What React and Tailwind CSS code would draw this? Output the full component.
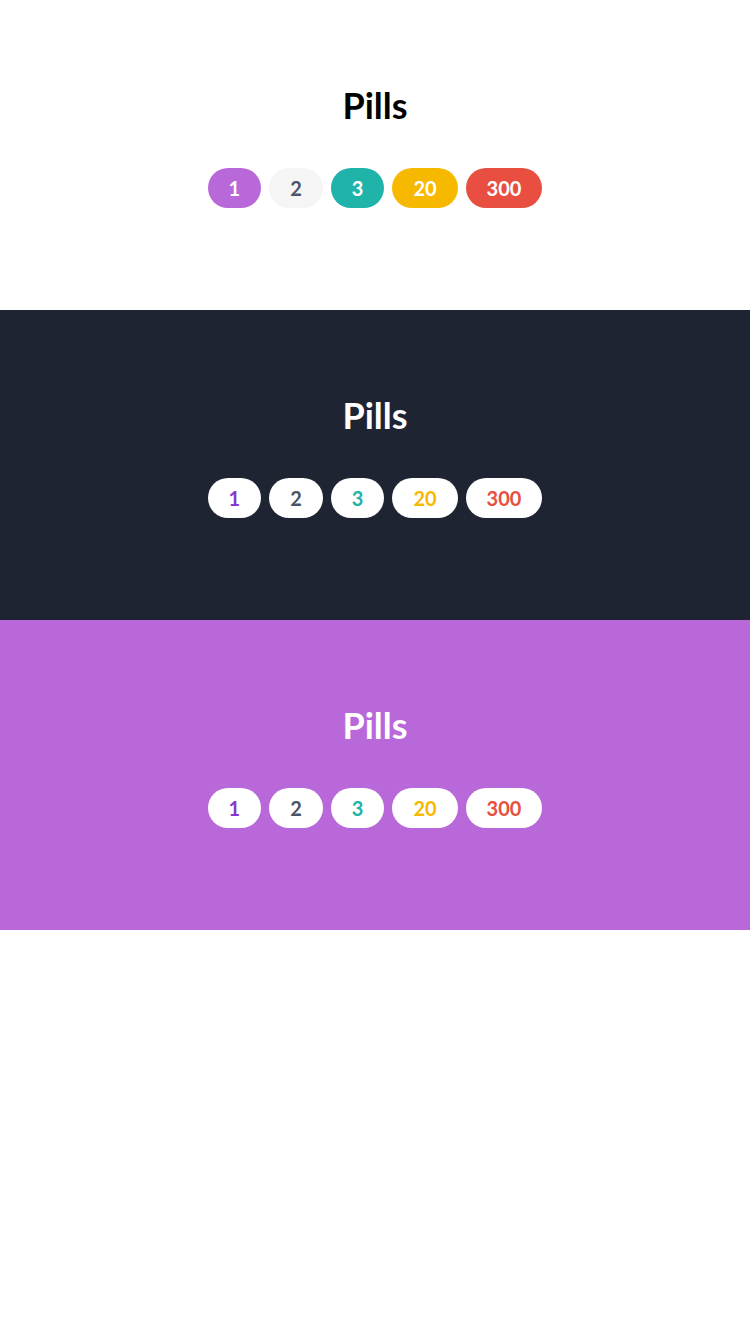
const pills = [
  { label: "1", solid: "bg-[#b968d9] text-white", light: "text-[#8a35d0]" },
  { label: "2", solid: "bg-[#f5f5f5] text-[#4b5466]", light: "text-[#4b5466]" },
  { label: "3", solid: "bg-[#20b3aa] text-white", light: "text-[#20b3aa]" },
  { label: "20", solid: "bg-[#f7b900] text-white", light: "text-[#f7b900]" },
  { label: "300", solid: "bg-[#e84f40] text-white", light: "text-[#e84f40]" },
];

function PillRow({ inverted }) {
  return (
    <div className="flex justify-center gap-2">
      {pills.map((p) => (
        <span
          key={p.label}
          className={`h-10 px-[21px] rounded-full flex items-center justify-center text-[20px] font-bold leading-none ${
            inverted ? "bg-white " + p.light : p.solid
          }`}
        >
          {p.label}
        </span>
      ))}
    </div>
  );
}

function Section({ bg, title, inverted }) {
  return (
    <section className={`h-[310px] pt-[83px] ${bg}`}>
      <h2 className={`text-center text-[36px] font-bold leading-[44px] ${title}`}>Pills</h2>
      <div className="mt-[41px]">
        <PillRow inverted={inverted} />
      </div>
    </section>
  );
}

export default function App() {
  return (
    <div className="w-[750px] min-h-[1334px] bg-white" style={{ fontFamily: '"Lato", "Open Sans", sans-serif' }}>
      <Section bg="bg-white" title="text-black" />
      <Section bg="bg-[#1f2433]" title="text-white" inverted />
      <Section bg="bg-[#b968d9]" title="text-white" inverted />
    </div>
  );
}
